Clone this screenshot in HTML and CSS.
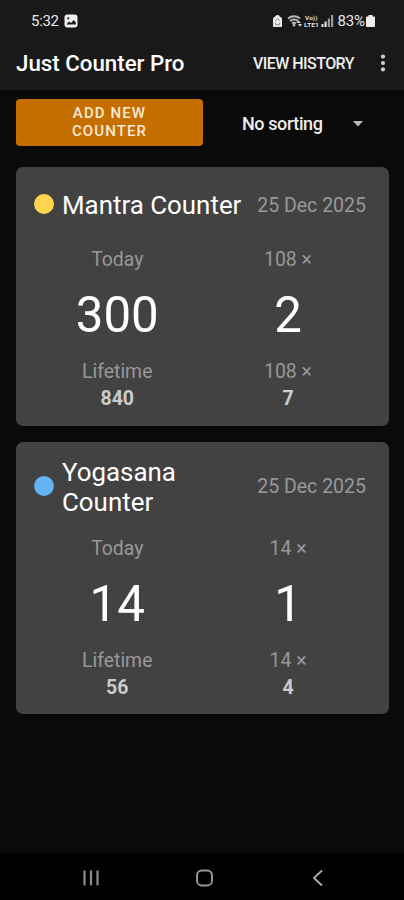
FILE: index.html
```
<!DOCTYPE html>
<html lang="en">
<head>
<meta charset="utf-8">
<title>Just Counter Pro</title>
<link rel="stylesheet" href="styles.css">
</head>
<body>
<header class="top">
  <div class="status">
    <span class="clock">5:32</span>
    <svg class="photo" width="14" height="14" viewBox="0 0 14 14"><rect x=".5" y=".5" width="13" height="13" rx="3" fill="#eee"/><path d="M2.500 10.500 5 7.500l2 1.600 2.800-3 2 2.400v2z" fill="#191919"/><circle cx="4.200" cy="4.300" r="1.100" fill="#191919"/></svg>
    <svg class="indicators" width="64" height="14" viewBox="0 0 64 14">
      <path d="M1 12V5q0-2 2-2.300Q3.500 1 5.500 1T8 2.700q2 .3 2 2.300v7q0 1-1 1H2q-1 0-1-1z" fill="#eee"/>
      <path d="m3.300 7 2.200-2.500L7.700 7M3 8.500l1 2.300h3.200l.8-2.300" fill="none" stroke="#777" stroke-width=".9"/>
      <path d="M16 4.500q6-4.500 12 0M18 7q4-3 8 0M20 9.400q2-1.500 4 0" fill="none" stroke="#bbb" stroke-width="2"/>
      <circle cx="22" cy="11.300" r="1.300" fill="#bbb"/>
      <path d="m24.500 9 2-2.500L29 9zM26 10h4l-2 2.700z" fill="#ddd"/>
      <text class="volte" x="33" y="5.500" textLength="12.500" lengthAdjust="spacingAndGlyphs">Vo))</text>
      <text class="volte" x="32" y="13" textLength="15" lengthAdjust="spacingAndGlyphs">LTE1</text>
      <path d="M49.500 10h2v3h-2zM52.500 7.500h2.200V13h-2.200z" fill="#ddd"/>
      <path d="M55.800 4.500H58V13h-2.200zM59 1h2.200v12H59z" fill="#999"/>
    </svg>
    <span class="percent">83%</span>
    <svg class="battery" width="9" height="14" viewBox="0 0 9 14"><path d="M2.500 1h4v1.500H8q1 0 1 1V12q0 1-1 1H1q-1 0-1-1V3.500q0-1 1-1h1.500z" fill="#eee"/></svg>
  </div>
  <div class="appbar">
    <h1 class="title">Just Counter Pro</h1>
    <span class="history">VIEW HISTORY</span>
    <svg class="more" width="6" height="18" viewBox="0 0 6 18" fill="#ccc"><circle cx="3" cy="2.600" r="2.100"/><circle cx="3" cy="9" r="2.100"/><circle cx="3" cy="15.400" r="2.100"/></svg>
  </div>
</header>
<main class="content">
  <div class="tools">
    <button class="add">ADD NEW<br>COUNTER</button>
    <div class="sort"><span class="sort-label">No sorting</span>
      <svg class="caret" width="10" height="6" viewBox="0 0 10 6"><path d="M0 0h10L5 5.500z" fill="#bbb"/></svg>
    </div>
  </div>
  <section class="card">
    <div class="card-head"><i class="dot yellow"></i><h2 class="name">Mantra Counter</h2><span class="date">25 Dec 2025</span></div>
    <div class="stats">
      <div class="stat"><span class="label">Today</span><span class="big">300</span><span class="label">Lifetime</span><b class="total">840</b></div>
      <div class="stat"><span class="label">108 ×</span><span class="big">2</span><span class="label">108 ×</span><b class="total">7</b></div>
    </div>
  </section>
  <section class="card">
    <div class="card-head tall"><i class="dot blue"></i><h2 class="name">Yogasana<br>Counter</h2><span class="date">25 Dec 2025</span></div>
    <div class="stats">
      <div class="stat"><span class="label">Today</span><span class="big">14</span><span class="label">Lifetime</span><b class="total">56</b></div>
      <div class="stat"><span class="label">14 ×</span><span class="big">1</span><span class="label">14 ×</span><b class="total">4</b></div>
    </div>
  </section>
</main>
<nav class="nav">
  <svg width="18" height="18" viewBox="0 0 18 18"><path d="M2.500 1.500v15M9 1.500v15M15.500 1.500v15" stroke="#8c8c8c" stroke-width="2.200"/></svg>
  <svg width="18" height="18" viewBox="0 0 18 18"><rect x="1" y="1.500" width="15" height="15" rx="4.800" fill="none" stroke="#999" stroke-width="1.900"/></svg>
  <svg width="18" height="18" viewBox="0 0 18 18"><path d="M13 1.500 5 9l8 7.500" fill="none" stroke="#aaa" stroke-width="1.900"/></svg>
</nav>
</body>
</html>
```
FILE: styles.css
```
* { box-sizing: border-box; }
body {
  margin: 0;
  height: 900px;
  display: flex;
  flex-direction: column;
  background: #0a0a0a;
  color: #fff;
  font-family: Roboto, "Liberation Sans", sans-serif;
}
h1, h2 { margin: 0; }
svg { display: block; flex: none; }
.top { height: 90px; background: #191919; }
.status {
  height: 41px;
  padding: 0 29px 0 31px;
  display: flex;
  align-items: center;
  color: #e8e8e8;
  font-size: 15px;
}
.clock { width: 33px; letter-spacing: -.3px; }
.indicators { margin-left: auto; }
.percent { margin-left: 1px; letter-spacing: -.1px; }
.battery { margin-left: 1px; }
.volte { font-size: 6px; font-weight: 700; fill: #ddd; }
.appbar {
  height: 44px;
  padding: 0 18px 0 16px;
  display: flex;
  align-items: center;
}
.title { font-size: 22.300px; font-weight: 500; flex: 1; white-space: nowrap; }
.history { font-size: 16px; font-weight: 500; color: #eee; letter-spacing: -.55px; white-space: nowrap; }
.more { margin-left: 26px; }
.content { flex: 1; padding: 9px 15px 0 16px; }
.tools { height: 47px; margin-bottom: 21px; display: flex; }
.add {
  width: 187px;
  border: 0;
  border-radius: 4px;
  background: #c56f00;
  color: #f7e8d8;
  font: 500 15px/17.500px Roboto, sans-serif;
  letter-spacing: 1.100px;
}
.sort {
  flex: 1;
  padding: 2px 26px 0 39px;
  display: flex;
  align-items: center;
  justify-content: space-between;
}
.sort-label { font-size: 18px; font-weight: 500; color: #eee; letter-spacing: -.4px; }
.card {
  margin-bottom: 16px;
  padding: 15px 23px 13px 18px;
  border-radius: 7px;
  background: #424242;
}
.card-head { height: 46px; display: flex; align-items: center; }
.card-head.tall { height: 60px; }
.dot { width: 20px; height: 20px; border-radius: 50%; margin: 0 8px 1.500px 0; }
.yellow { background: #ffd54f; }
.blue { background: #64b5f6; }
.name { flex: 1; font-size: 25.900px; font-weight: 400; line-height: 30px; white-space: nowrap; }
.date { font-size: 19.500px; color: #989898; white-space: nowrap; }
.stats {
  margin: 18px -9.500px 0 0;
  display: flex;
}
.stat { display: flex; flex-direction: column; align-items: center; width: 167.500px; }
.stat + .stat { width: 176px; }
.label { font-size: 19.400px; line-height: 27px; color: #989898; }
.big { font-size: 49.200px; line-height: 85px; }
.total { font-size: 19.500px; line-height: 27.500px; color: #ccc; font-weight: 700; }
.nav {
  height: 47px;
  padding: 2px 77px 0 82px;
  display: flex;
  align-items: center;
  justify-content: space-between;
  background: #000;
}
```
